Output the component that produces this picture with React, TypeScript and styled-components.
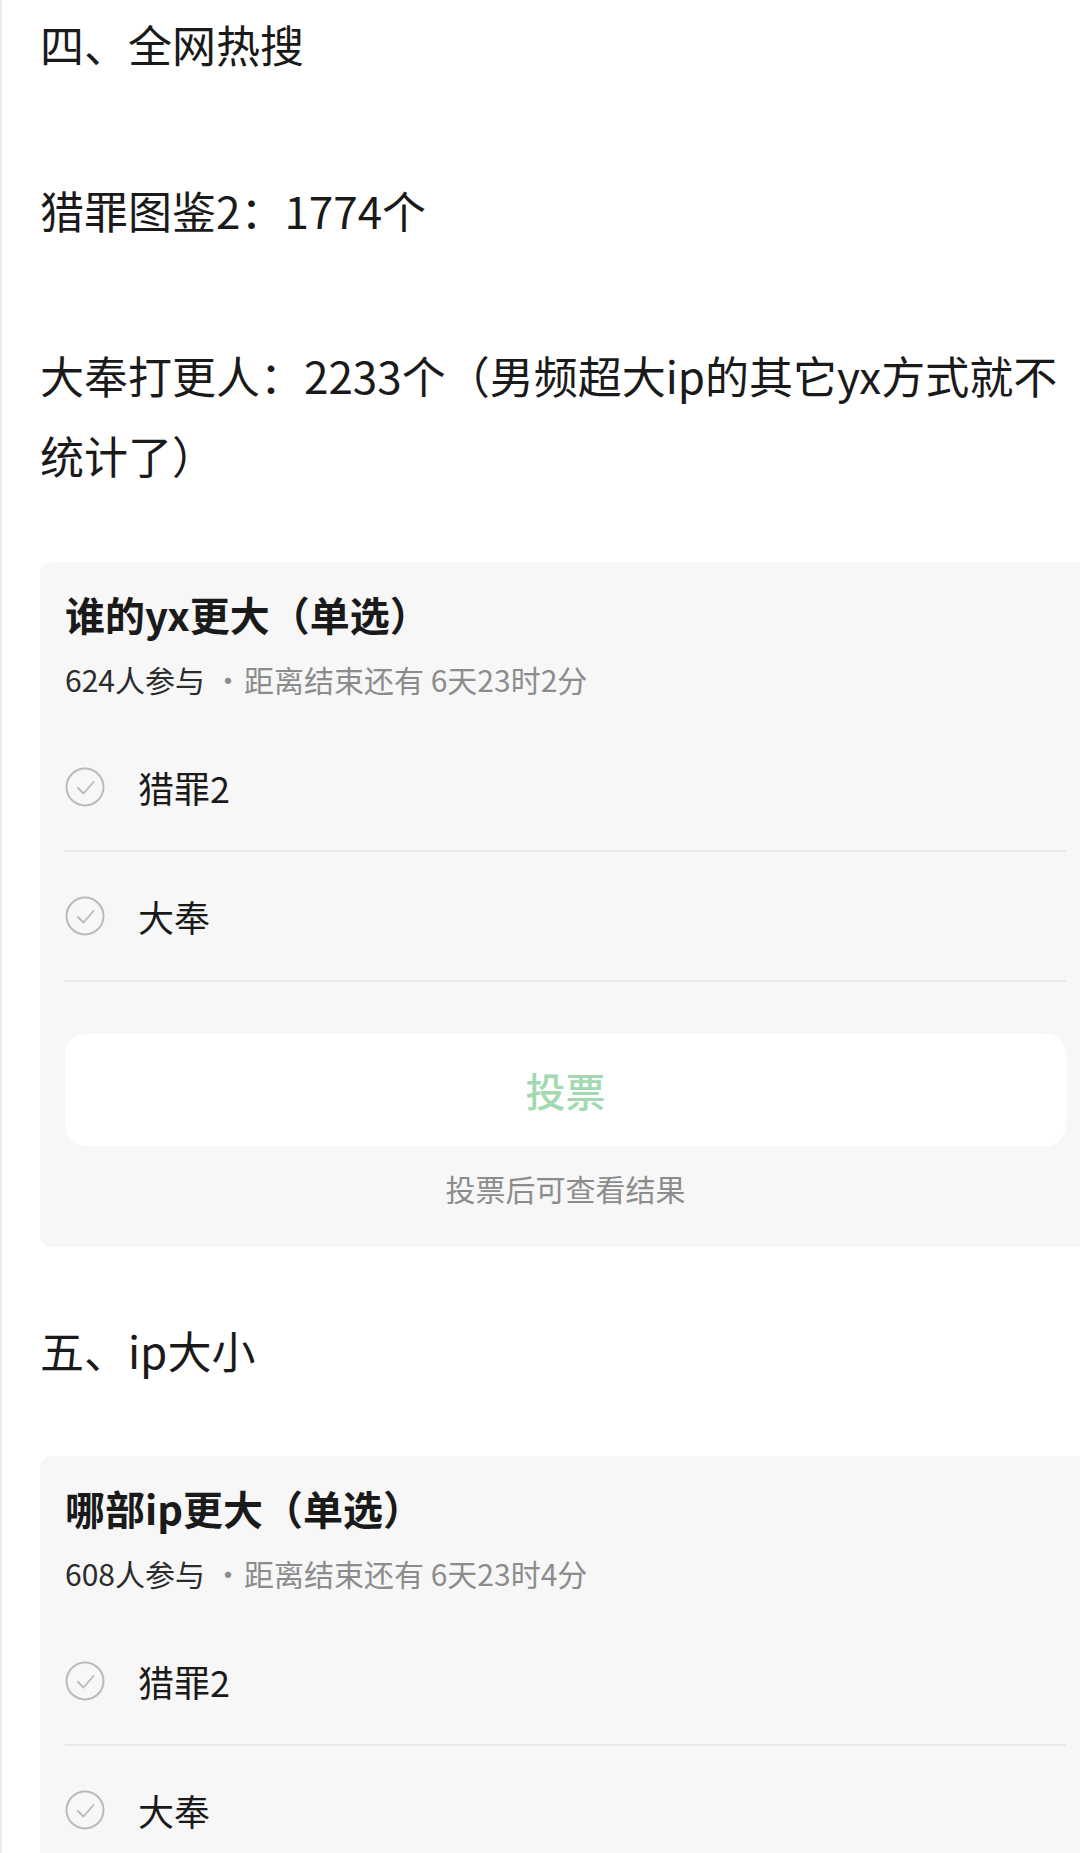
import React from 'react';
import styled, { createGlobalStyle } from 'styled-components';

const GlobalStyle = createGlobalStyle`
  html, body {
    margin: 0;
    padding: 0;
    background: #ffffff;
    overflow: hidden;
  }
  body {
    font-family: "Noto Sans CJK SC", "Noto Sans", sans-serif;
    color: #1a1a1a;
    border-left: 2px solid #ececec;
  }
`;

const palette = {
  text: '#1a1a1a',
  gray: '#8c8c8c',
  card: '#f7f7f7',
  line: '#e9e9e9',
  icon: '#bababa',
  green: '#a2d9b1',
};

const Article = styled.div`
  width: 1051px;
  margin-left: 38px;
  padding-top: 4px;
  display: flex;
  flex-direction: column;
`;

const Paragraph = styled.p<{ gap?: number }>`
  margin: 0;
  margin-top: ${props => props.gap ?? 0}px;
  font-size: 44px;
  line-height: 80px;
  color: ${palette.text};
`;

const PollCard = styled.section<{ gap: number }>`
  margin-top: ${props => props.gap}px;
  background-color: ${palette.card};
  border-radius: 12px;
  padding: 24px 25px 37px 25px;
  display: flex;
  flex-direction: column;
`;

const PollTitle = styled.h3`
  margin: 0;
  font-size: 40px;
  line-height: 56px;
  font-weight: 700;
  color: ${palette.text};
`;

const PollMeta = styled.div`
  margin-top: 15px;
  font-size: 30px;
  line-height: 44px;
  color: ${palette.gray};
  .count {
    color: #2b2b2b;
  }
  .dot {
    margin: 0 1px 0 8px;
  }
`;

const OptionList = styled.ul`
  list-style: none;
  margin: 22px 0 0 0;
  padding: 0;
`;

const OptionRow = styled.li`
  display: flex;
  align-items: center;
  gap: 33px;
  height: 128px;
  border-bottom: 2px solid ${palette.line};
  font-size: 36px;
  color: ${palette.text};
  &:first-child {
    height: 127px;
  }
`;

const VoteButton = styled.button`
  margin-top: 52px;
  height: 112px;
  border: none;
  border-radius: 20px;
  background-color: #ffffff;
  font-family: inherit;
  font-size: 40px;
  font-weight: 500;
  color: ${palette.green};
`;

const VoteHint = styled.div`
  margin-top: 20px;
  text-align: center;
  font-size: 30px;
  line-height: 44px;
  color: ${palette.gray};
`;

const CheckCircle: React.FC = () => (
  <svg width="40" height="40" viewBox="0 0 40 40">
    <circle cx="20" cy="20" r="18.5" fill="none" stroke={palette.icon} strokeWidth="2" />
    <polyline
      points="13,21 18.5,26.5 28.5,15"
      fill="none"
      stroke={palette.icon}
      strokeWidth="1.8"
      strokeLinecap="round"
      strokeLinejoin="round"
    />
  </svg>
);

interface PollProps {
  title: string;
  count: number;
  remaining: string;
  options: string[];
  gap: number;
  showFooter?: boolean;
}

const Poll: React.FC<PollProps> = ({ title, count, remaining, options, gap, showFooter = true }) => (
  <PollCard gap={gap}>
    <PollTitle>{title}</PollTitle>
    <PollMeta>
      <span className="count">{count}人参与</span>
      <span className="dot">·</span>
      距离结束还有 {remaining}
    </PollMeta>
    <OptionList>
      {options.map(option => (
        <OptionRow key={option}>
          <CheckCircle />
          {option}
        </OptionRow>
      ))}
    </OptionList>
    {showFooter && (
      <>
        <VoteButton>投票</VoteButton>
        <VoteHint>投票后可查看结果</VoteHint>
      </>
    )}
  </PollCard>
);

const App: React.FC = () => (
  <>
    <GlobalStyle />
    <Article>
      <Paragraph>四、全网热搜</Paragraph>
      <Paragraph gap={86}>猎罪图鉴2：1774个</Paragraph>
      <Paragraph gap={85}>大奉打更人：2233个（男频超大ip的其它yx方式就不统计了）</Paragraph>
      <Poll
        gap={67}
        title="谁的yx更大（单选）"
        count={624}
        remaining="6天23时2分"
        options={['猎罪2', '大奉']}
      />
      <Paragraph gap={63}>五、ip大小</Paragraph>
      {/* second poll runs past the bottom of the screenshot, footer not visible */}
      <Poll
        gap={66}
        title="哪部ip更大（单选）"
        count={608}
        remaining="6天23时4分"
        options={['猎罪2', '大奉']}
        showFooter={false}
      />
    </Article>
  </>
);

export default App;
